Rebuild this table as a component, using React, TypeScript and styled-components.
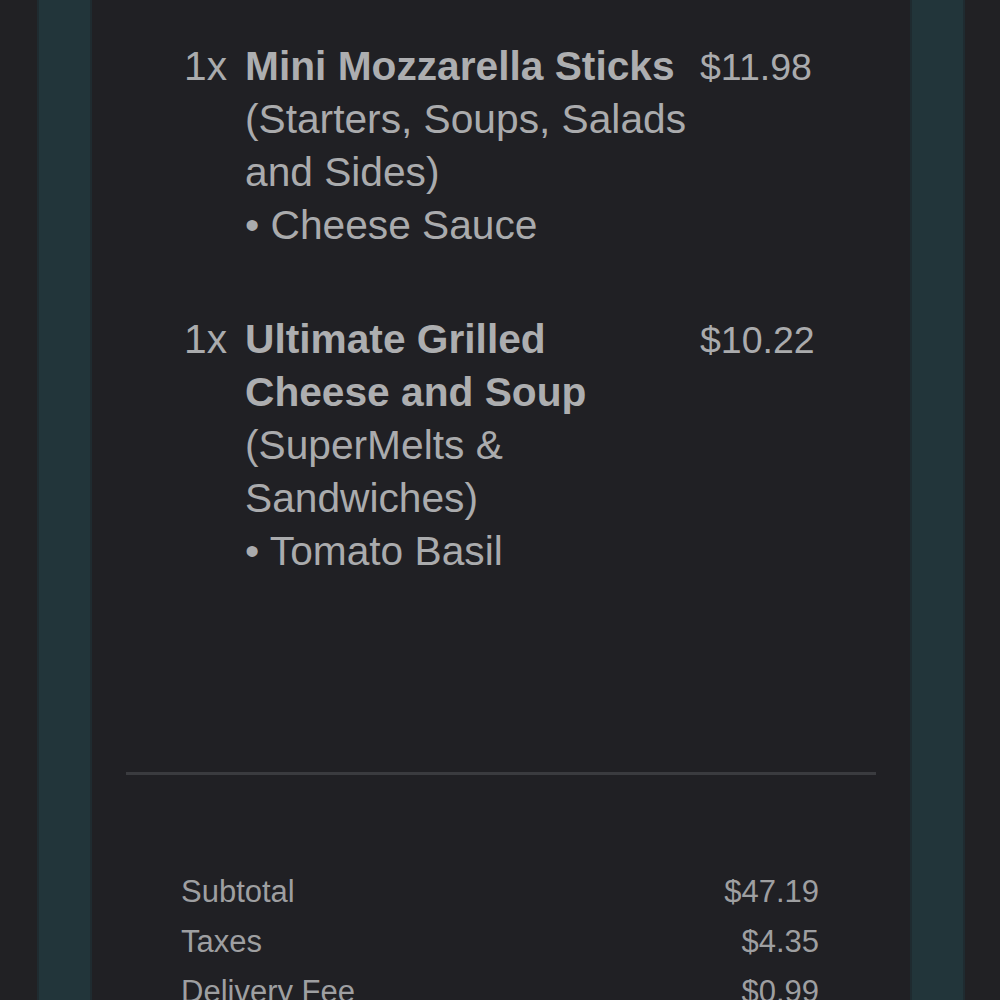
import React from "react";
import styled, { createGlobalStyle } from "styled-components";

const GlobalStyle = createGlobalStyle`
  html, body {
    margin: 0;
    padding: 0;
    background: #212124;
  }
  body {
    font-family: "Liberation Sans", Arial, sans-serif;
  }
`;

interface LineItem {
  qty: number;
  name: string;
  category: string;
  option: string;
  price: string;
}

const ITEMS: LineItem[] = [
  {
    qty: 1,
    name: "Mini Mozzarella Sticks",
    category: "(Starters, Soups, Salads and Sides)",
    option: "Cheese Sauce",
    price: "$11.98",
  },
  {
    qty: 1,
    name: "Ultimate Grilled Cheese and Soup",
    category: "(SuperMelts & Sandwiches)",
    option: "Tomato Basil",
    price: "$10.22",
  },
];

const TOTALS = [
  { label: "Subtotal", value: "$47.19" },
  { label: "Taxes", value: "$4.35" },
  { label: "Delivery Fee", value: "$0.99" },
];

export default function App() {
  return (
    <>
      <GlobalStyle />
      <Page>
        <Stripe />
        <Receipt>
          <ItemList>
            {ITEMS.map((item) => (
              <ItemRow key={item.name}>
                <Qty>{item.qty}x</Qty>
                <Details>
                  <ItemName>{item.name}</ItemName>
                  <Category>{item.category}</Category>
                  <OptionLine>• {item.option}</OptionLine>
                </Details>
                <Price>{item.price}</Price>
              </ItemRow>
            ))}
          </ItemList>
          <Divider />
          <Totals>
            {TOTALS.map((t) => (
              <TotalRow key={t.label}>
                <span>{t.label}</span>
                <span>{t.value}</span>
              </TotalRow>
            ))}
          </Totals>
        </Receipt>
        <Stripe />
      </Page>
    </>
  );
}

const Page = styled.div`
  display: flex;
  height: 1000px;
  overflow: hidden;
  padding-left: 37px;
  background: #212124;
`;

const Stripe = styled.div`
  width: 51px;
  flex-shrink: 0;
  background: #22353a;
  border-left: 2px solid #1f2b30;
  border-right: 2px solid #1f2b30;
`;

const Receipt = styled.div`
  width: 818px;
  flex-shrink: 0;
  background: #202024;
  display: flex;
  flex-direction: column;
  color: #aaabad;

  & > * {
    flex-shrink: 0;
  }
`;

const ItemList = styled.div`
  display: flex;
  flex-direction: column;
  gap: 61px;
  padding: 40px 0 0 92px;
`;

const ItemRow = styled.div`
  display: grid;
  grid-template-columns: 61px 448px auto;
  align-items: baseline;
`;

const Qty = styled.div`
  font-size: 40.7px;
  line-height: 53px;
`;

const Details = styled.div`
  display: flex;
  flex-direction: column;
  font-size: 40.7px;
  line-height: 53px;
`;

const ItemName = styled.div`
  font-weight: 700;
  color: #adaeb0;
`;

const Category = styled.div``;

const OptionLine = styled.div``;

const Price = styled.div`
  font-size: 37.5px;
  line-height: 53px;
  padding-left: 7px;
`;

const Divider = styled.div`
  height: 3px;
  background: #3a3b3f;
  margin: 194px 34px 0;
`;

const Totals = styled.div`
  display: flex;
  flex-direction: column;
  padding: 92px 91px 0 89px;
  color: #9e9fa1;
`;

const TotalRow = styled.div`
  display: flex;
  justify-content: space-between;
  font-size: 31px;
  line-height: 50px;
`;
